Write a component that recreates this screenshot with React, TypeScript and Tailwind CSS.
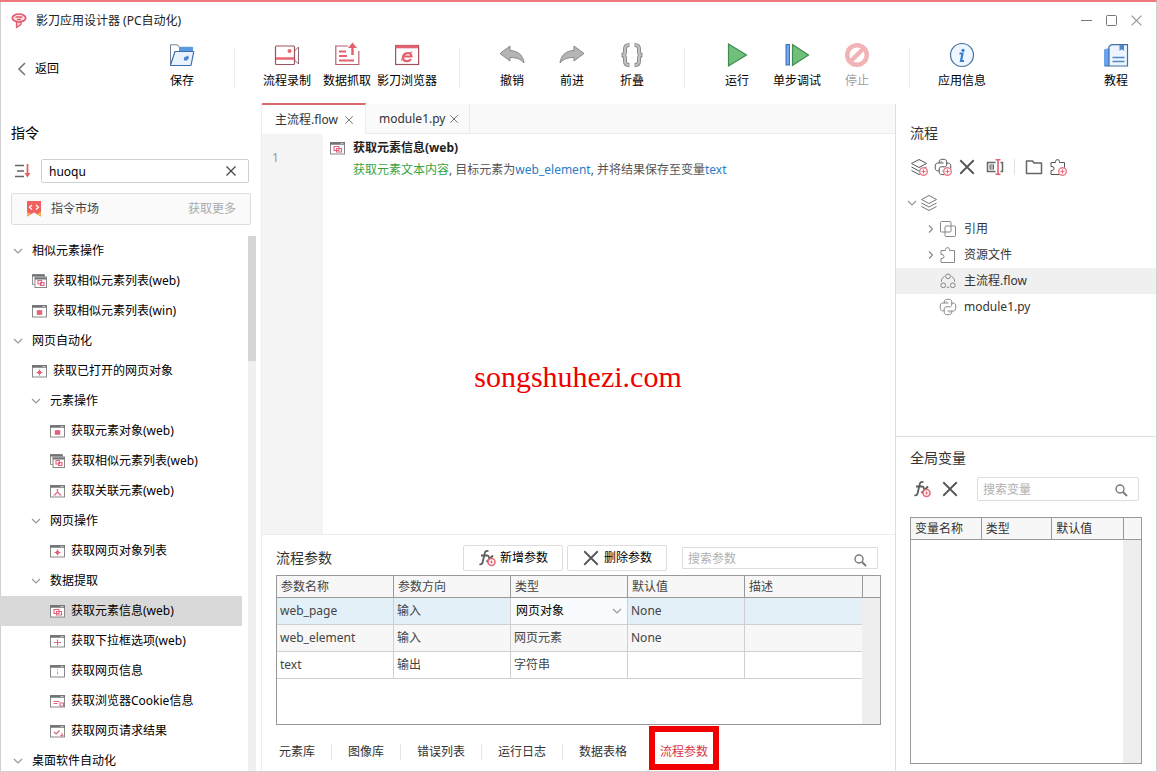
import { useState } from 'react';
import type { ReactNode } from 'react';

interface IconProps {
  className?: string;
}

interface CommandNode {
  label: string;
  level: number;
  icon?: string;
}

interface Param {
  name: string;
  direction: string;
  type: string;
  value: string;
  desc: string;
}

/* ---------- small icons ---------- */

const CloseIcon = ({ className = 'size-3' }: IconProps) => (
  <svg viewBox="0 0 12 12" className={className} fill="none" stroke="currentColor" strokeWidth="1.2">
    <path d="M1.5 1.5l9 9M10.5 1.5l-9 9" />
  </svg>
);

const ChevronDown = ({ className = 'size-3' }: IconProps) => (
  <svg viewBox="0 0 12 12" className={className} fill="none" stroke="#999" strokeWidth="1.2">
    <path d="M2 4l4 4 4-4" />
  </svg>
);

const ChevronRight = ({ className = 'size-3' }: IconProps) => (
  <svg viewBox="0 0 12 12" className={className} fill="none" stroke="#888" strokeWidth="1.1">
    <path d="M4 2.500l3.500 3.500L4 9.500" />
  </svg>
);

const SearchIcon = ({ className = 'size-3.5' }: IconProps) => (
  <svg viewBox="0 0 14 14" className={className} fill="none" stroke="#777" strokeWidth="1.4">
    <circle cx="6" cy="6" r="4" />
    <path d="M9 9l4 4" strokeWidth="1.8" />
  </svg>
);

const LayersIcon = ({ className = 'size-[18px]' }: IconProps) => (
  <svg viewBox="0 0 18 18" className={className} fill="none" stroke="currentColor" strokeLinejoin="round">
    <path d="M9 1.5l7.500 4L9 9.500l-7.500-4z" />
    <path d="M1.500 9L9 13l7.500-4M1.500 12.500l7.500 4 7.500-4" />
  </svg>
);

const PythonIcon = ({ className = 'size-[18px]' }: IconProps) => (
  <svg viewBox="0 0 18 18" className={className} fill="none" stroke="currentColor" strokeLinejoin="round">
    <path d="M9.5 5H3.6C2 5 1.2 6.3 1.2 9s.8 3.800 2.200 3.800h1.800v-2c0-1.200.8-2 2-2h3.600c1.100 0 1.900-.8 1.900-1.900V3.300c0-1.300-1.400-2-3.700-2s-3.700.6-3.700 2V5" />
    <path d="M8.500 13h5.900c1.600 0 2.400-1.300 2.400-4s-.8-3.800-2.200-3.800h-1.800M5.300 12.800v1.900c0 1.300 1.400 2 3.700 2s3.700-.6 3.700-2V13" />
    <path d="M7.200 3v.8M10.800 14.200v.8" />
  </svg>
);

const PuzzleIcon = ({ className = 'size-[18px]' }: IconProps) => (
  <svg viewBox="0 0 18 18" className={className} fill="none" stroke="currentColor" strokeLinejoin="round">
    <path d="M2 4.500h4.500V3.600a2 2 0 1 1 4 0v.9H15.500V16.500H2v-4h1a2 2 0 1 0 0-4H2z" />
  </svg>
);

const RefIcon = () => (
  <svg viewBox="0 0 18 18" className="size-[18px]" fill="none" stroke="currentColor">
    <rect x="1.500" y="1.500" width="10.500" height="10.500" rx="1" />
    <rect x="6" y="6" width="10.500" height="10.500" rx="1" />
  </svg>
);

const FlowIcon = () => (
  <svg viewBox="0 0 18 18" className="size-[18px]" fill="none" stroke="currentColor">
    <circle cx="9" cy="4.300" r="2.400" />
    <circle cx="4.200" cy="13.300" r="2.400" />
    <circle cx="13.800" cy="13.300" r="2.400" />
    <path d="M5.600 4.200C3.500 5.500 2.500 7 2.300 9.600M12.400 4.200c2.100 1.300 3.100 2.800 3.300 5.400M7.800 15.300h2.400" />
  </svg>
);

// Red plus ring that sits on the corner of the "new" icons
const WithBadge = ({ children }: { children: ReactNode }) => (
  <span className="relative block size-[18px]">
    {children}
    <svg viewBox="0 0 18 18" className="absolute inset-0 size-[18px]" fill="none">
      <circle cx="13.500" cy="13.500" r="3.800" fill="#fff" stroke="#ee8490" strokeWidth="1.500" />
      <path d="M13.500 11.500v4M11.500 13.500h4" stroke="#e8697a" />
    </svg>
  </span>
);

const FxIcon = () => (
  <svg viewBox="0 0 18 18" className="size-[18px]" fill="none" stroke="#5c5c5c" strokeWidth="1.800">
    <path d="M10.500 2.300C8 1.200 7 2.500 6.500 5L4.700 13c-.4 2-1.400 2.800-3.200 2.200M3 6.500h6.500c1 0 1.300 1 1.500 2l.8 3M15 6.500L8.500 13" />
    <circle cx="13.500" cy="13" r="3.500" fill="#fff" stroke="#e8697a" strokeWidth="1.600" />
    <path d="M13.500 11.300v3.400M11.800 13h3.400" stroke="#e8697a" strokeWidth=".9" />
  </svg>
);

const RenameIcon = () => (
  <svg viewBox="0 0 18 18" className="size-[18px]" fill="none" stroke="#666" strokeWidth="1.500">
    <path d="M9.500 4.500H1.500v9h8M14.500 4.500h2v9h-2" />
    <path d="M4 7h3.500v4H4zM4 9h3.500" strokeWidth="1.100" />
    <path d="M12 2v14M9.500 1.700h5M9.500 16.300h5" stroke="#e4626d" strokeWidth="1.600" />
  </svg>
);

const FolderIcon = () => (
  <svg viewBox="0 0 18 18" className="size-[18px]" fill="none" stroke="#666" strokeWidth="1.500" strokeLinejoin="round">
    <path d="M1.500 3h6l1.500 2h7.500v10.500h-15z" />
  </svg>
);

const windowMarks: Record<string, ReactNode> = {
  cursor: <path d="M5.500 7h4v3h-4zM7.500 6v5M5 8.500h5" strokeWidth="1.500" />,
  list: <path d="M6 6.500h3.500V10H6zM8.500 8.500H12v3H8.500z" />,
  tree: <path d="M7.500 5.500v2.500L4.500 11M7.500 8l3 3M3.500 11h2M9.500 11h2M6.500 5.700h2" />,
  plus: <path d="M7.500 5.500v6M4.500 8.500h6M6.500 7.500h2v2h-2z" />,
  move: <path d="M7.500 5.500v6M4 8.500h7" />,
  info: <path d="M7.500 7.500v3M7.500 5.500v1" stroke="#aaa" />,
  frame: <path d="M4 5.500h5v4H4zM6.500 7.500h5V11h-5z" />,
  cookie: <path d="M3.500 7.500h6M3.500 9.500h4M10 9h3.500v3H10z" />,
  check: <path d="M4 8l2.200 2 3.300-3.500M12 9v4M10.500 11.500h3" />,
};

const WindowIcon = ({ mark }: { mark: string }) => (
  <svg viewBox="0 0 15 14" className="h-3.5 w-[15px] shrink-0" fill="none">
    {mark === 'list' ? (
      <>
        <path d="M2.500 10.500H.6V.6h11.800v2" stroke="#888" />
        <rect x="3" y="3" width="11.500" height="10.500" fill="#fff" stroke="#888" />
        <path d="M0 1.500h12.500M3 4.500h11.500" stroke="#707376" strokeWidth="2" />
      </>
    ) : (
      <>
        <rect x=".5" y="1.500" width="14" height="11.500" fill="#fff" stroke="#888" />
        <path d="M0 2.500h15" stroke="#707376" strokeWidth="2.500" />
        <path d="M10.500 2.500h3" stroke="#ddd" strokeWidth=".8" />
      </>
    )}
    <g stroke="#e4627a" strokeWidth="1.100">{windowMarks[mark]}</g>
  </svg>
);

/* ---------- toolbar icons ---------- */

const SaveIcon = () => (
  <svg viewBox="0 0 26 26" className="size-[26px]" fill="none" strokeLinejoin="round">
    <path d="M1.500 23V2.800h7l2 2.500h13V11" fill="#fff" stroke="#6f8095" />
    <path d="M10 5h14v4H10z" fill="#5b9ae0" />
    <path d="M1.500 23L6 9.500h18.800L22 23.500H2z" fill="#e9f3ff" stroke="#3d6fae" strokeWidth="1.200" />
    <path d="M15 15.500l4-2 1 2.500-2 2.500h-3z" fill="#4c86cf" />
  </svg>
);

const RecordIcon = () => (
  <svg viewBox="0 0 26 26" className="size-[26px]" fill="none">
    <path d="M20.500 9l4-4v17l-4-4" stroke="#8a6a70" />
    <rect x="1.500" y="4" width="19" height="18.500" rx="1" fill="#fff" stroke="#a0525c" strokeWidth="1.200" />
    <path d="M2 16.500h18" stroke="#ea6670" strokeWidth="2.500" />
    <circle cx="15.500" cy="9" r="2" fill="#ea6670" />
  </svg>
);

const ScrapeIcon = () => (
  <svg viewBox="0 0 26 26" className="size-[26px]" fill="none">
    <path d="M14 4H1.800v18.500h23V9" stroke="#b8616b" strokeWidth="1.200" />
    <path d="M5 9.500h7M5 14h8M5 18.500h15" stroke="#e4626d" strokeWidth="1.800" />
    <path d="M18.500 13V4" stroke="#e4626d" strokeWidth="2.500" />
    <path d="M14 6l4.500-5.500L23 6z" fill="#e4626d" />
  </svg>
);

const BrowserIcon = () => (
  <svg viewBox="0 0 26 26" className="size-[26px]" fill="none">
    <rect x="1.600" y="3.500" width="23" height="19" fill="#fff" stroke="#a0525c" strokeWidth="1.200" />
    <path d="M1.500 4.800h23" stroke="#e4626d" strokeWidth="3" />
    <path d="M9 14.500h8.500c0-5-8-4.500-8.500.8-.3 5 6 4.700 8 1.800" stroke="#e4626d" strokeWidth="2.200" />
    <path d="M8 19c-2-.5 2-8.500 10.500-9" stroke="#e4626d" strokeWidth=".9" />
  </svg>
);

const UndoIcon = ({ className = 'size-[26px]' }: IconProps) => (
  <svg viewBox="0 0 26 26" className={className}>
    <path d="M1 11.500L11 4v4.500c8 .3 13 4.500 14 12.500-3.500-4-7.500-5.500-14-5.500V19z" fill="#b3b5b7" stroke="#86898b" />
  </svg>
);

const FoldIcon = () => (
  <svg viewBox="0 0 26 26" className="size-[26px]" fill="none">
    <path d="M10.500 3C6.500 3 6 4.500 6 7v2.500C6 11.500 5 13 2.500 13c2.500 0 3.500 1.500 3.500 3.500V19c0 2.500.5 4 4.500 4M15.500 3C19.500 3 20 4.500 20 7v2.500c0 2 1 3.500 3.500 3.500-2.500 0-3.500 1.500-3.500 3.500V19c0 2.500-.5 4-4.500 4" stroke="#85888a" strokeWidth="4" />
    <path d="M10.500 3C6.500 3 6 4.500 6 7v2.500C6 11.500 5 13 3.500 13c1.500 0 2.500 1.500 2.500 3.500V19c0 2.500.5 4 4.500 4M15.500 3C19.500 3 20 4.500 20 7v2.500c0 2 1 3.500 2.500 3.500-1.500 0-2.500 1.500-2.500 3.500V19c0 2.500-.5 4-4.500 4" stroke="#c0c2c3" strokeWidth="2.200" />
  </svg>
);

const RunIcon = () => (
  <svg viewBox="0 0 26 26" className="size-[26px]">
    <path d="M4.500 2l18 11-18 11z" fill="#6ec07a" stroke="#418a52" strokeWidth="1.200" />
  </svg>
);

const StepIcon = () => (
  <svg viewBox="0 0 26 26" className="size-[26px]">
    <rect x="2" y="2.500" width="3.500" height="20.500" fill="#6ea5ee" stroke="#3e72b8" />
    <path d="M8.500 2.500l16 10.500-16 10.500z" fill="#6ec07a" stroke="#418a52" strokeWidth="1.200" />
  </svg>
);

const StopIcon = () => (
  <svg viewBox="0 0 26 26" className="size-[26px]" fill="none" stroke="#f2b3b6">
    <circle cx="13" cy="13" r="9.800" strokeWidth="4.500" />
    <path d="M7 19L19 7" strokeWidth="4.500" />
  </svg>
);

const InfoIcon = () => (
  <svg viewBox="0 0 26 26" className="size-[26px]" fill="none">
    <circle cx="13" cy="13" r="11.500" fill="#eef6ff" stroke="#47719f" strokeWidth="1.200" />
    <circle cx="14" cy="8.300" r="1.600" fill="#3b7ccc" />
    <path d="M10.500 11.500h3l-1.500 7.500h3" stroke="#3b7ccc" strokeWidth="2.200" />
  </svg>
);

const TutorialIcon = () => (
  <svg viewBox="0 0 26 26" className="size-[26px]" fill="none">
    <path d="M1 7.500l5-1.500v18H1z" fill="#6ba2ea" />
    <path d="M6 24V4.500l2.500-1.800H24.500V24z" fill="#ecf5ff" stroke="#3f6fa8" strokeWidth="1.200" />
    <path d="M6 24H1.500" stroke="#3f6fa8" />
    <path d="M16.500 3h4.500v6l-2.200-1.800L16.500 9z" fill="#4f86c8" />
    <path d="M9.500 15.500h12M9.500 19.500h12" stroke="#4f86c8" strokeWidth="1.500" />
  </svg>
);

/* ---------- toolbar ---------- */

const toolGroups = [
  [{ label: '保存', icon: <SaveIcon /> }],
  [
    { label: '流程录制', icon: <RecordIcon /> },
    { label: '数据抓取', icon: <ScrapeIcon /> },
    { label: '影刀浏览器', icon: <BrowserIcon /> },
  ],
  [
    { label: '撤销', icon: <UndoIcon /> },
    { label: '前进', icon: <UndoIcon className="size-[26px] -scale-x-100" /> },
    { label: '折叠', icon: <FoldIcon /> },
  ],
  [
    { label: '运行', icon: <RunIcon /> },
    { label: '单步调试', icon: <StepIcon /> },
    { label: '停止', icon: <StopIcon />, disabled: true },
  ],
  [{ label: '应用信息', icon: <InfoIcon /> }],
];

interface ToolButtonProps {
  label: string;
  icon: ReactNode;
  disabled?: boolean;
}

const ToolButton = ({ label, icon, disabled }: ToolButtonProps) => (
  <button
    disabled={disabled}
    className="flex w-[60px] shrink-0 flex-col items-center gap-[5px] whitespace-nowrap text-black disabled:text-[#a0a0a0]"
  >
    {icon}
    <span className="leading-4">{label}</span>
  </button>
);

const Header = () => (
  <header className="shrink-0">
    <div className="flex h-9 items-center px-[11px] pt-0.5">
      <svg viewBox="0 0 16 16" className="size-4" fill="none">
        <path d="M5.500 9v5.500l4.500-3V9" fill="#fbd0d5" stroke="#e4596c" strokeWidth="1.300" strokeLinejoin="round" />
        <ellipse cx="8" cy="5" rx="6.700" ry="4" fill="#fde4e7" stroke="#e4596c" strokeWidth="1.700" />
        <path d="M4.500 4h7M6 6.500h4" stroke="#e4596c" strokeWidth="1.500" />
      </svg>
      <h1 className="ml-[9px] text-[#222]">影刀应用设计器 (PC自动化)</h1>
      <div className="ml-auto flex items-center gap-3 pr-0.5 pb-0.5 text-[#777]">
        <button aria-label="最小化">
          <svg viewBox="0 0 13 13" className="size-[13px]" stroke="currentColor"><path d="M1 6.500h11" /></svg>
        </button>
        <button aria-label="最大化">
          <svg viewBox="0 0 13 13" className="size-[13px]" fill="none" stroke="currentColor"><rect x="1.500" y="1.500" width="10" height="10" rx="1" /></svg>
        </button>
        <button aria-label="关闭">
          <CloseIcon className="size-[13px] text-[#999]" />
        </button>
      </div>
    </div>
    <div className="flex h-[66px] pt-1 pr-2.5 pl-[15px]">
      <button className="flex w-[137px] shrink-0 items-center gap-1.5 pb-2 text-black">
        <svg viewBox="0 0 14 16" className="h-4 w-3.5" fill="none" stroke="#777" strokeWidth="1.600">
          <path d="M10 2L4 8l6 6" />
        </svg>
        返回
      </button>
      {toolGroups.map((group, i) => (
        <div key={i} className="flex items-start">
          {i > 0 && <div className="mx-[22px] mt-1.5 h-10 w-px bg-[#ececec]" />}
          {group.map((tool) => (
            <ToolButton key={tool.label} {...tool} />
          ))}
        </div>
      ))}
      <div className="ml-auto flex items-start">
        <ToolButton label="教程" icon={<TutorialIcon />} />
      </div>
    </div>
  </header>
);

/* ---------- left: commands ---------- */

const commands: CommandNode[] = [
  { label: '相似元素操作', level: 0 },
  { label: '获取相似元素列表(web)', level: 1, icon: 'list' },
  { label: '获取相似元素列表(win)', level: 1, icon: 'cursor' },
  { label: '网页自动化', level: 0 },
  { label: '获取已打开的网页对象', level: 1, icon: 'plus' },
  { label: '元素操作', level: 1 },
  { label: '获取元素对象(web)', level: 2, icon: 'cursor' },
  { label: '获取相似元素列表(web)', level: 2, icon: 'list' },
  { label: '获取关联元素(web)', level: 2, icon: 'tree' },
  { label: '网页操作', level: 1 },
  { label: '获取网页对象列表', level: 2, icon: 'plus' },
  { label: '数据提取', level: 1 },
  { label: '获取元素信息(web)', level: 2, icon: 'frame' },
  { label: '获取下拉框选项(web)', level: 2, icon: 'move' },
  { label: '获取网页信息', level: 2, icon: 'info' },
  { label: '获取浏览器Cookie信息', level: 2, icon: 'cookie' },
  { label: '获取网页请求结果', level: 2, icon: 'check' },
  { label: '桌面软件自动化', level: 0 },
];

const groupIndent = ['pl-3', 'pl-[30px]', 'pl-12'];
const leafIndent = ['pl-3.5', 'pl-8', 'pl-[50px]'];

const CommandPanel = () => {
  const [query, setQuery] = useState('huoqu');
  const [selected, setSelected] = useState(12);

  return (
    <aside className="flex w-[262px] shrink-0 flex-col border-r border-[#ececec]">
      <h2 className="mt-[19px] pl-[11px] text-sm leading-5 text-black">指令</h2>
      <div className="mt-4 flex items-center pr-3 pl-3.5">
        <button aria-label="排序">
          <svg viewBox="0 0 17 14" className="h-3.5 w-[17px]" fill="none">
            <path d="M1 1.500h9M3 7h7M1 12.500h9" stroke="#666" strokeWidth="1.500" />
            <path d="M13.500 0v11" stroke="#e4626d" strokeWidth="1.800" />
            <path d="M10.500 9h6L13.500 13.500z" fill="#e4626d" />
          </svg>
        </button>
        <div className="relative ml-2.5 flex-1">
          <input
            aria-label="搜索指令"
            value={query}
            onChange={(e) => setQuery(e.target.value)}
            className="block h-6 w-full rounded-xs border border-[#cfcfcf] pr-7 pl-[7px] text-black outline-none"
          />
          <button aria-label="清空" onClick={() => setQuery('')} className="absolute top-1.5 right-3 text-[#444]">
            <CloseIcon />
          </button>
        </div>
      </div>
      <button className="mr-2.5 ml-[11px] mt-2.5 flex h-8 items-center rounded-xs border border-[#dedede] bg-[#fafafa] px-3.5 text-[#444]">
        <svg viewBox="0 0 16 16" className="size-4" fill="none">
          <path d="M1 0h14v15.500l-7-4-7 4z" fill="#f0605f" />
          <path d="M1 11l4 2-4 2.500zM15 11l-4 2 4 2.500z" fill="#f6b04a" />
          <path d="M6 4L3.500 6.300 6 8.500M10 4l2.500 2.300L10 8.500" stroke="#fff" strokeWidth="1.200" />
        </svg>
        <span className="ml-[9px]">指令市场</span>
        <span className="ml-auto text-[#aaa]">获取更多</span>
      </button>
      <div className="mt-[11px] flex min-h-0 flex-1">
        <ul className="min-w-0 flex-1 overflow-hidden text-black">
          {commands.map((node, i) => (
            <li key={i}>
              <button
                onClick={() => setSelected(i)}
                className={`flex h-[30px] w-full items-center whitespace-nowrap ${
                  node.icon ? `gap-1.5 ${leafIndent[node.level]}` : `gap-2 ${groupIndent[node.level]}`
                } ${selected === i ? 'bg-[#d9d9d9]' : ''}`}
              >
                {node.icon ? <WindowIcon mark={node.icon} /> : <ChevronDown />}
                {node.label}
              </button>
            </li>
          ))}
        </ul>
        <div className="mr-[5px] ml-1.5 w-2 bg-[#f0f0f0]">
          <div className="h-[125px] bg-[#d6d6d6]" />
        </div>
      </div>
    </aside>
  );
};

/* ---------- centre: editor and parameters ---------- */

const Editor = () => (
  <>
    <div className="flex h-[30px] shrink-0 bg-[#f9f9f9] text-[#333]">
      <div className="-mt-px flex w-[104px] items-center border-t-2 border-r border-t-[#d8686e] border-r-[#ececec] bg-white pl-[13px]">
        <button>主流程.flow</button>
        <button aria-label="关闭 主流程.flow" className="ml-1.5 text-[#777]"><CloseIcon className="size-2.5" /></button>
      </div>
      <div className="flex w-[104px] items-center border-r border-b border-[#ececec] bg-[#fafafa] pl-[13px]">
        <button>module1.py</button>
        <button aria-label="关闭 module1.py" className="ml-1 text-[#777]"><CloseIcon className="size-2.5" /></button>
      </div>
      <div className="flex-1 border-b border-[#ececec]" />
    </div>
    <div className="flex min-h-0 flex-1">
      <div className="w-[61px] shrink-0 bg-[#f4f4f4] pt-4 pl-2.5 text-[#999]">
        <span className="block leading-4">1</span>
      </div>
      <div className="min-w-0 flex-1 pt-1 pl-[7px]">
        <div className="flex items-center gap-2">
          <WindowIcon mark="frame" />
          <h3 className="font-bold leading-5 text-[#222]">获取元素信息(web)</h3>
        </div>
        <p className="mt-0.5 pl-[23px] leading-5 text-[#555]">
          <span className="text-[#3aa344]">获取元素文本内容</span>, 目标元素为
          <span className="text-[#2b7cc4]">web_element</span>, 并将结果保存至变量
          <span className="text-[#2b7cc4]">text</span>
        </p>
      </div>
    </div>
  </>
);

const params: Param[] = [
  { name: 'web_page', direction: '输入', type: '网页对象', value: 'None', desc: '' },
  { name: 'web_element', direction: '输入', type: '网页元素', value: 'None', desc: '' },
  { name: 'text', direction: '输出', type: '字符串', value: '', desc: '' },
];

const rowColors = ['bg-[#e3f0f8]', 'bg-[#f7f7f7]', 'bg-white'];

const ParamTable = () => (
  <div className="mx-3.5 flex h-[150px] border border-[#999]">
    <div className="min-w-0 flex-1">
      <table className="w-full table-fixed border-separate border-spacing-0 text-left text-[#444]">
        <thead>
          <tr className="h-[22px] bg-[#f7f7f7]">
            {['参数名称', '参数方向', '类型', '默认值', '描述'].map((title) => (
              <th key={title} className="border-r border-b border-[#999] p-0 pl-1 font-normal leading-4 last:border-r-0">
                {title}
              </th>
            ))}
          </tr>
        </thead>
        <tbody>
          {params.map((param, i) => (
            <tr key={param.name} className={`h-[27px] ${rowColors[i]}`}>
              <td className="border-r border-b border-[#cfcfcf] p-0 pl-[3px] leading-4">{param.name}</td>
              <td className="border-r border-b border-[#cfcfcf] p-0 pl-[3px] leading-4">{param.direction}</td>
              <td className="border-r border-b border-[#cfcfcf] p-0 pl-[3px] leading-4">
                {i === 0 ? (
                  <div className="relative -ml-[3px] bg-[#f8fcff]">
                    <select aria-label="参数类型" className="block h-[26px] w-full appearance-none pl-[5px] text-black outline-none">
                      <option>网页对象</option>
                      <option>网页元素</option>
                      <option>字符串</option>
                    </select>
                    <ChevronDown className="pointer-events-none absolute top-[7px] right-1 size-3" />
                  </div>
                ) : (
                  param.type
                )}
              </td>
              <td className="border-r border-b border-[#cfcfcf] p-0 pl-[3px] leading-4">{param.value}</td>
              <td className="border-b border-[#cfcfcf] p-0 pl-[3px] leading-4">{param.desc}</td>
            </tr>
          ))}
        </tbody>
      </table>
    </div>
    <div className="w-[18px] shrink-0 bg-[#eee]">
      <div className="h-[22px] border-b border-l border-[#999] bg-[#f7f7f7]" />
    </div>
  </div>
);

const bottomTabs = ['元素库', '图像库', '错误列表', '运行日志', '数据表格', '流程参数'];

const ParamPanel = () => {
  const [active, setActive] = useState('流程参数');

  return (
    <section className="shrink-0 border-t border-[#ececec] text-[#333]">
      <div className="flex h-10 items-center pt-1.5 pr-[17px] pl-3.5">
        <h2 className="text-sm">流程参数</h2>
        <button className="ml-auto flex h-[26px] w-[100px] items-center justify-center gap-1 rounded-xs border border-[#dedede] text-black">
          <FxIcon />
          新增参数
        </button>
        <button className="ml-1 flex h-[26px] w-[100px] items-center justify-center gap-1 rounded-xs border border-[#dedede] text-black">
          <CloseIcon className="size-[18px] text-[#555]" />
          删除参数
        </button>
        <div className="relative ml-[15px] w-[196px]">
          <input
            aria-label="搜索参数"
            placeholder="搜索参数"
            className="block h-[22px] w-full border border-[#dedede] pr-7 pl-[5px] outline-none placeholder:text-[#b0b0b0]"
          />
          <SearchIcon className="absolute top-1.5 right-[11px] size-3.5" />
        </div>
      </div>
      <ParamTable />
      <nav className="flex h-[46px] items-center pt-2 pl-[17px]">
        {bottomTabs.map((tab, i) => (
          <div key={tab} className="flex items-center">
            {i > 0 && <div className={`mx-4 h-4 w-px ${tab === active ? 'bg-transparent' : 'bg-[#e6e6e6]'}`} />}
            <button
              onClick={() => setActive(tab)}
              className={`relative leading-4 ${tab === active ? 'text-[#d9344a]' : ''}`}
            >
              {tab}
              {tab === '流程参数' && (
                <span className="pointer-events-none absolute -inset-x-[11px] -top-[18px] -bottom-[10px] border-[6px] border-[#f00000]" />
              )}
            </button>
          </div>
        ))}
      </nav>
    </section>
  );
};

/* ---------- right: files and variables ---------- */

const files = [
  { label: '引用', icon: <RefIcon />, folder: true },
  { label: '资源文件', icon: <PuzzleIcon />, folder: true },
  { label: '主流程.flow', icon: <FlowIcon />, folder: false },
  { label: 'module1.py', icon: <PythonIcon />, folder: false },
];

const FilePanel = () => {
  const [selected, setSelected] = useState('主流程.flow');

  return (
    <section className="flex-1">
      <h2 className="mt-[19px] pl-3.5 text-sm leading-5">流程</h2>
      <div className="mt-[15px] flex items-center gap-1.5 pl-3.5 text-[#555]">
        <button aria-label="新建流程"><WithBadge><LayersIcon /></WithBadge></button>
        <button aria-label="新建代码模块"><WithBadge><PythonIcon /></WithBadge></button>
        <button aria-label="删除"><CloseIcon className="size-[18px]" /></button>
        <button aria-label="重命名" className="ml-1"><RenameIcon /></button>
        <div className="mx-1 h-4 w-px bg-[#e2e2e2]" />
        <button aria-label="新建文件夹"><FolderIcon /></button>
        <button aria-label="新建资源"><WithBadge><PuzzleIcon /></WithBadge></button>
      </div>
      <ul className="mt-3.5 text-[#333]">
        <li className="flex h-[26px] items-center pl-2.5 text-[#777]">
          <ChevronDown />
          <LayersIcon className="ml-0.5 size-[18px]" />
        </li>
        {files.map((file) => (
          <li key={file.label}>
            <button
              onClick={() => setSelected(file.label)}
              className={`flex h-[26px] w-full items-center pl-[29px] ${
                selected === file.label ? 'bg-[#f0f0f0]' : ''
              }`}
            >
              <span className="w-3">{file.folder && <ChevronRight />}</span>
              <span className="ml-0.5 text-[#888]">{file.icon}</span>
              <span className="ml-[7px]">{file.label}</span>
            </button>
          </li>
        ))}
      </ul>
    </section>
  );
};

const VariablePanel = () => (
  <section className="flex h-[335px] shrink-0 flex-col border-t border-[#dedede] pr-3.5 pb-[7px] pl-3.5">
    <h2 className="mt-[11px] text-sm leading-5">全局变量</h2>
    <div className="mt-[9px] flex items-center">
      <button aria-label="新增变量" className="ml-[3px]"><FxIcon /></button>
      <button aria-label="删除变量" className="ml-2.5 text-[#555]"><CloseIcon className="size-[18px]" /></button>
      <div className="relative mr-[3px] ml-[18px] flex-1">
        <input
          aria-label="搜索变量"
          placeholder="搜索变量"
          className="block h-6 w-full rounded-xs border border-[#dedede] pr-7 pl-[5px] outline-none placeholder:text-[#b0b0b0]"
        />
        <SearchIcon className="absolute top-1.5 right-[11px] size-3.5" />
      </div>
    </div>
    <div className="mt-4 flex min-h-0 flex-1 border border-[#999]">
      <div className="min-w-0 flex-1">
        <table className="w-full table-fixed border-separate border-spacing-0 text-left">
          <thead>
            <tr className="h-[22px] bg-[#f7f7f7]">
              {['变量名称', '类型', '默认值'].map((title) => (
                <th key={title} className="border-r border-b border-[#999] p-0 pl-1 font-normal leading-4 last:border-r-0">
                  {title}
                </th>
              ))}
            </tr>
          </thead>
        </table>
      </div>
      <div className="w-[18px] shrink-0 bg-[#eee]">
        <div className="h-[22px] border-b border-l border-[#999] bg-[#f7f7f7]" />
      </div>
    </div>
  </section>
);

const App = () => (
  <div className="relative flex h-screen flex-col overflow-hidden border-t-2 border-r border-b border-[#d0d0d0] border-t-[#ee7a80] bg-white font-['Noto_Sans','Noto_Sans_CJK_SC',sans-serif] text-xs text-[#333] shadow-[inset_1px_0_#d0d0d0]">
    <Header />
    <div className="flex min-h-0 flex-1">
      <CommandPanel />
      <main className="flex min-w-0 flex-1 flex-col">
        <Editor />
        <ParamPanel />
      </main>
      <aside className="flex w-[261px] shrink-0 flex-col border-l border-[#dedede]">
        <FilePanel />
        <VariablePanel />
      </aside>
    </div>
    <div className="pointer-events-none absolute inset-x-0 top-[357px] text-center font-['Liberation_Serif',serif] text-3xl text-[#f00000]">
      songshuhezi.com
    </div>
  </div>
);

export default App;
